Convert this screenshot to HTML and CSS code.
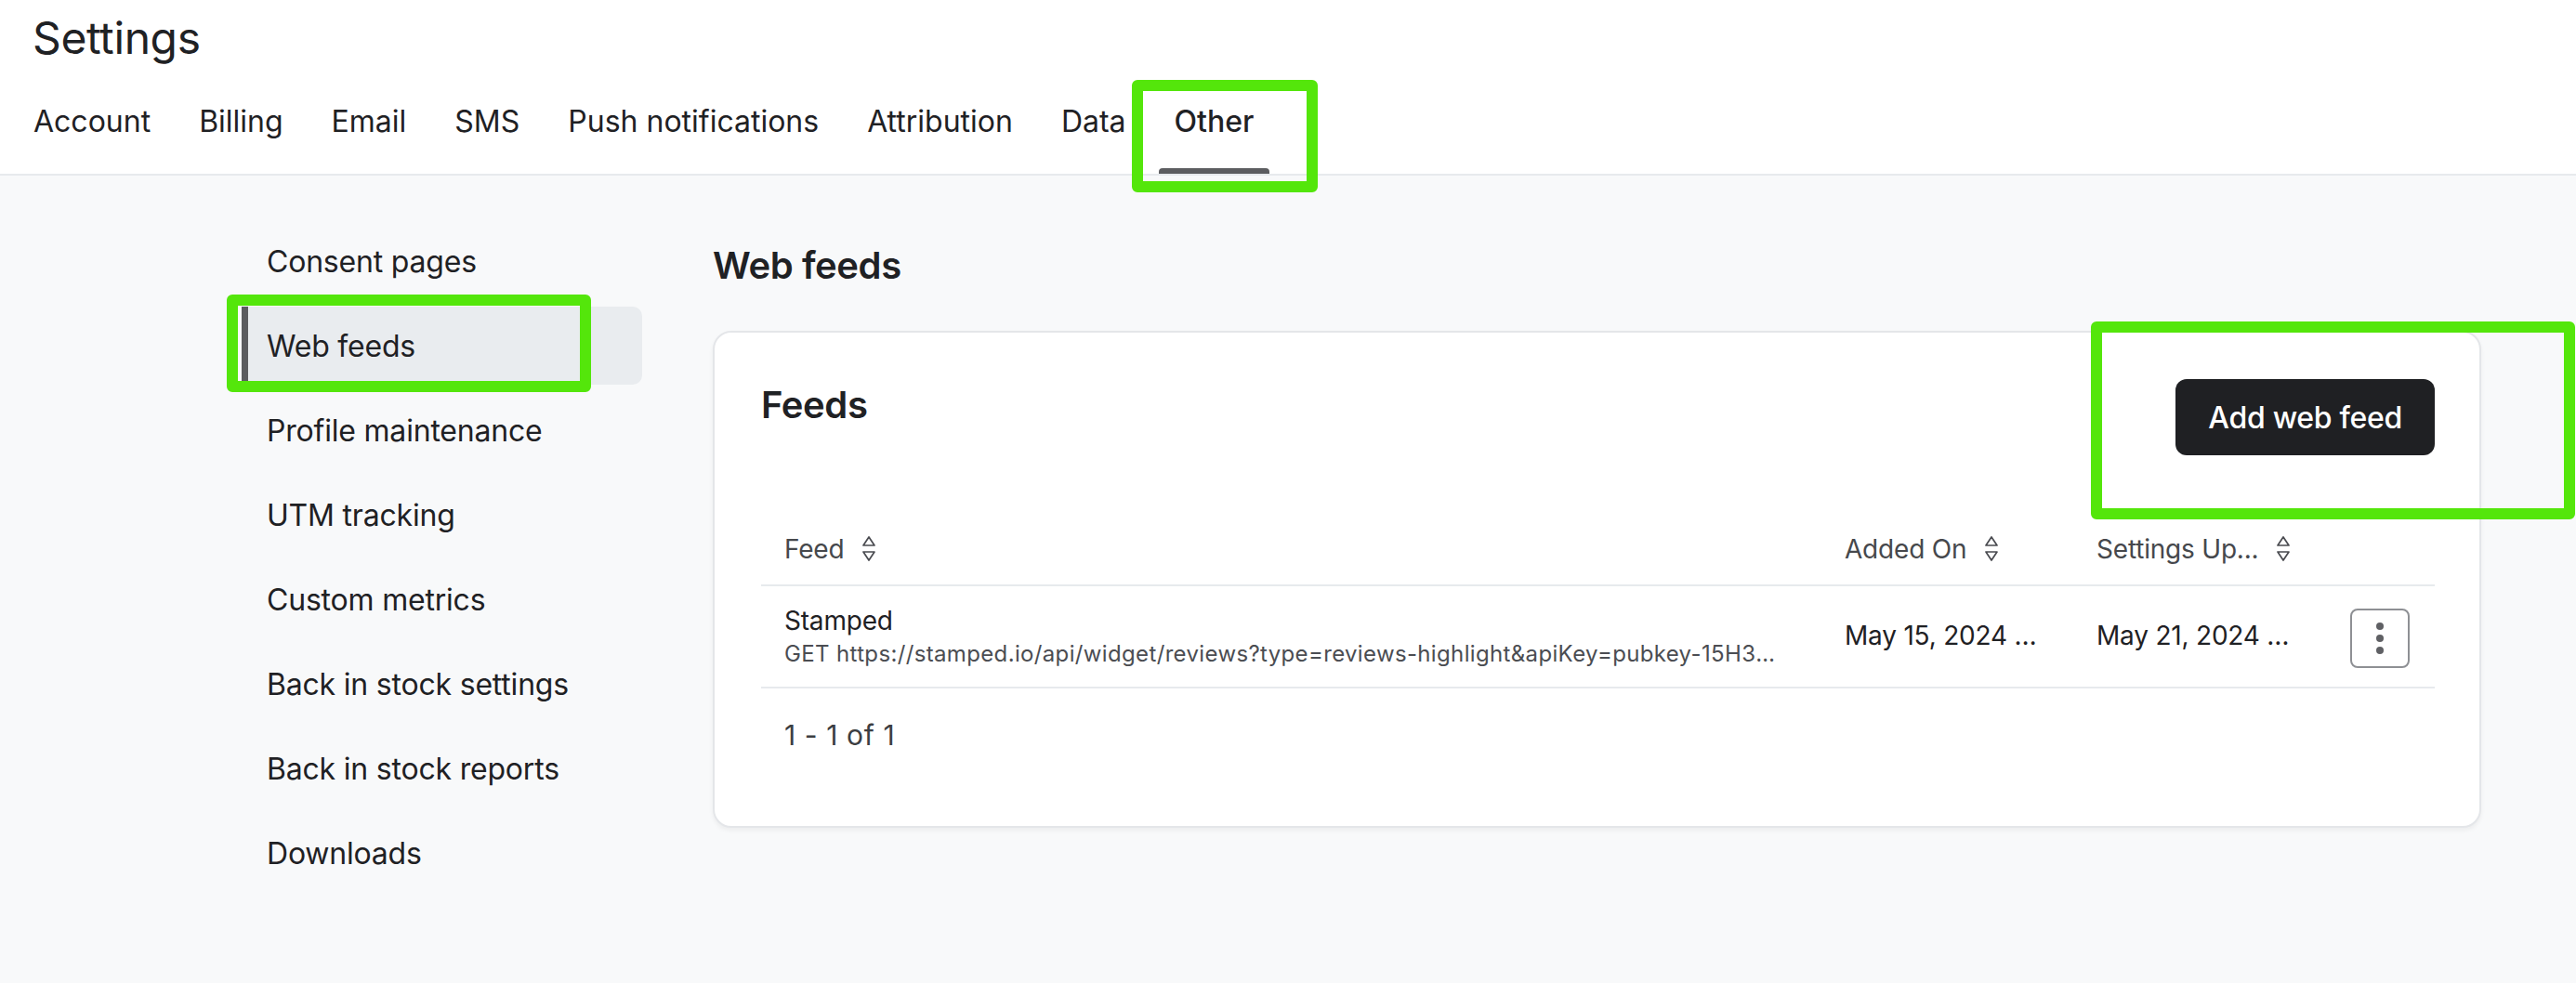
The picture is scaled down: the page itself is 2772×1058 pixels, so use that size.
FILE: index.html
```html
<!DOCTYPE html>
<html lang="en">
<head>
    <meta charset="UTF-8">
    <meta name="viewport" content="width=device-width, initial-scale=1.0">
    <title>Settings - Web feeds</title>
    <link rel="stylesheet" href="styles.css">
</head>
<body>
    <header class="topbar">
        <h1 class="page-title">Settings</h1>
        <nav class="tabs">
            <a class="tab" href="#">Account</a>
            <a class="tab" href="#">Billing</a>
            <a class="tab" href="#">Email</a>
            <a class="tab" href="#">SMS</a>
            <a class="tab" href="#">Push notifications</a>
            <a class="tab" href="#">Attribution</a>
            <a class="tab" href="#">Data</a>
            <a class="tab active" href="#">Other</a>
        </nav>
    </header>

    <div class="layout">
        <aside class="sidenav">
            <a class="side-item" href="#">Consent pages</a>
            <a class="side-item active" href="#">Web feeds</a>
            <a class="side-item" href="#">Profile maintenance</a>
            <a class="side-item" href="#">UTM tracking</a>
            <a class="side-item" href="#">Custom metrics</a>
            <a class="side-item" href="#">Back in stock settings</a>
            <a class="side-item" href="#">Back in stock reports</a>
            <a class="side-item" href="#">Downloads</a>
        </aside>

        <main class="content">
            <h2 class="section-title">Web feeds</h2>

            <section class="card">
                <div class="card-head">
                    <h3 class="card-title">Feeds</h3>
                    <button class="btn-primary">Add web feed</button>
                </div>

                <table class="feeds-table">
                    <colgroup>
                        <col class="col-feed">
                        <col class="col-date">
                        <col class="col-date">
                        <col>
                    </colgroup>
                    <thead>
                        <tr>
                            <th><span class="th-sort">Feed <svg class="sort-icon" viewBox="0 0 18 30"><path d="M9 2 L15 11 H3 Z"/><path d="M3 18 H15 L9 27 Z"/></svg></span></th>
                            <th><span class="th-sort">Added On <svg class="sort-icon" viewBox="0 0 18 30"><path d="M9 2 L15 11 H3 Z"/><path d="M3 18 H15 L9 27 Z"/></svg></span></th>
                            <th><span class="th-sort">Settings Up... <svg class="sort-icon" viewBox="0 0 18 30"><path d="M9 2 L15 11 H3 Z"/><path d="M3 18 H15 L9 27 Z"/></svg></span></th>
                            <th></th>
                        </tr>
                    </thead>
                    <tbody>
                        <tr>
                            <td class="cell-feed">
                                <div class="feed-name">Stamped</div>
                                <div class="feed-url">GET https://stamped.io/api/widget/reviews?type=reviews-highlight&amp;apiKey=pubkey-15H3zQ7</div>
                            </td>
                            <td class="cell-date">May 15, 2024 …</td>
                            <td class="cell-date">May 21, 2024 …</td>
                            <td class="cell-action">
                                <button class="kebab" aria-label="More actions">
                                    <span></span><span></span><span></span>
                                </button>
                            </td>
                        </tr>
                    </tbody>
                </table>

                <div class="pager">1 - 1 of 1</div>
            </section>
        </main>
    </div>

    <!-- highlight boxes drawn over the screenshot -->
    <div class="mark mark-tab"></div>
    <div class="mark mark-side"></div>
    <div class="mark mark-button"></div>
</body>
</html>
```

FILE: styles.css
```css
:root {
    --text: #1f2124;
    --muted: #46484c;
    --line: #e7eaed;
    --page: #f8f9fa;
    --dark: #1f2023;
    --mark: #54e60b;
}

* {
    box-sizing: border-box;
}

body {
    margin: 0;
    min-height: 100vh;
    position: relative;
    background: var(--page);
    color: var(--text);
    font-family: Inter, "Noto Sans", sans-serif;
    overflow: hidden;
}

a {
    color: inherit;
    text-decoration: none;
}

/* top header */
.topbar {
    background: #fff;
    border-bottom: 2px solid var(--line);
    padding: 12px 0 0 19px;
}

.page-title {
    margin: 0 0 0 16px;
    font-size: 48px;
    line-height: 58px;
    font-weight: 400;
    letter-spacing: -0.4px;
}

.tabs {
    display: flex;
    gap: 18px;
}

.tab {
    position: relative;
    padding: 41px 17px 36px;
    font-size: 32px;
    line-height: 40px;
}

.tab.active {
    font-weight: 500;
}

.tab.active::after {
    content: "";
    position: absolute;
    left: 0;
    right: 0;
    bottom: 0;
    height: 6px;
    background: #5c5d60;
    border-radius: 4px 4px 0 0;
}

/* body layout */
.layout {
    display: grid;
    grid-template-columns: 431px 1903px;
    column-gap: 76px;
    padding: 50px 0 0 260px;
}

.sidenav {
    display: flex;
    flex-direction: column;
    gap: 7px;
}

.side-item {
    display: flex;
    align-items: center;
    height: 84px;
    padding-left: 20px;
    border-left: 7px solid transparent;
    border-radius: 0 10px 10px 0;
    font-size: 32px;
    letter-spacing: -0.2px;
}

.side-item.active {
    background: #e9ecef;
    border-left-color: #5b5c5f;
}

.content {
    padding-top: 23px;
}

.section-title {
    margin: 0 0 46px;
    font-size: 40px;
    line-height: 48px;
    font-weight: 600;
    letter-spacing: -0.4px;
}

.card {
    background: #fff;
    border: 2px solid #e4e6e9;
    border-radius: 20px;
    box-shadow: 0 3px 5px rgba(0,0,0,0.05);
    padding: 50px 48px 50px 50px;
}

.card-head {
    display: flex;
    justify-content: space-between;
    align-items: flex-start;
}

.card-title {
    margin: 0;
    font-size: 40px;
    line-height: 56px;
    font-weight: 600;
    letter-spacing: -0.4px;
}

.btn-primary {
    height: 82px;
    padding: 0 35px;
    border: none;
    border-radius: 12px;
    background: var(--dark);
    color: #fff;
    font-family: inherit;
    font-size: 32px;
    font-weight: 500;
    letter-spacing: -0.3px;
}

/* table */
.feeds-table {
    width: 100%;
    margin-top: 63px;
    border-collapse: collapse;
    table-layout: fixed;
}

.col-feed {
    width: 1141px;
}

.col-date {
    width: 271px;
}

.feeds-table th {
    padding: 18px 10px 18px 25px;
    text-align: left;
    font-size: 28px;
    line-height: 40px;
    font-weight: 400;
    color: var(--muted);
    letter-spacing: -0.2px;
    border-bottom: 2px solid var(--line);
    white-space: nowrap;
}

.th-sort {
    display: inline-flex;
    align-items: center;
    gap: 18px;
}

.sort-icon {
    width: 18px;
    height: 30px;
    fill: none;
    stroke: #4a4b50;
    stroke-width: 1.7;
    stroke-linejoin: round;
}

.feeds-table td {
    padding: 17px 25px 19px;
    vertical-align: middle;
    border-bottom: 2px solid var(--line);
    font-size: 28px;
    letter-spacing: -0.2px;
}

.feeds-table td.cell-feed {
    padding-right: 38px;
}

.feed-name {
    line-height: 40px;
}

.feed-url {
    font-size: 24px;
    line-height: 32px;
    color: #4b4d52;
    letter-spacing: 0.35px;
    white-space: nowrap;
    overflow: hidden;
    text-overflow: ellipsis;
}

.feeds-table td.cell-date {
    padding-right: 8px;
    white-space: nowrap;
}

.feeds-table td.cell-action {
    padding: 0;
    text-align: center;
}

.kebab {
    display: inline-flex;
    flex-direction: column;
    align-items: center;
    justify-content: center;
    gap: 5px;
    width: 64px;
    height: 64px;
    padding: 0;
    background: #fff;
    border: 2px solid #8e9094;
    border-radius: 8px;
}

.kebab span {
    width: 8px;
    height: 8px;
    border-radius: 50%;
    background: #5f6064;
}

.pager {
    padding: 30px 25px 28px;
    font-size: 30px;
    line-height: 40px;
    color: #3c3e42;
    letter-spacing: 0.6px;
}

/* green highlight boxes */
.mark {
    position: absolute;
    border: 12px solid var(--mark);
    border-radius: 6px;
}

.mark-tab {
    left: 1218px;
    top: 86px;
    width: 200px;
    height: 121px;
}

.mark-side {
    left: 244px;
    top: 317px;
    width: 392px;
    height: 105px;
}

.mark-button {
    left: 2250px;
    top: 346px;
    width: 521px;
    height: 213px;
}
```
